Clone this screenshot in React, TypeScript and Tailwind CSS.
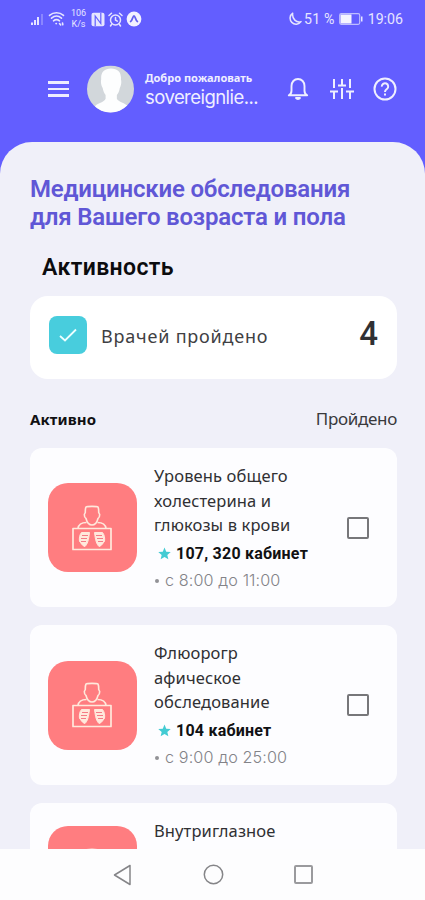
import React from 'react';

function StatusBar() {
  return (
    <div className="flex h-[38px] items-center justify-between pl-[31px] pr-[22px] text-[#e6e5ff]">
      <div className="flex items-center">
        <svg width="14" height="13" viewBox="0 0 14 13" fill="currentColor">
          <rect x="0" y="9.5" width="2" height="2.5" />
          <rect x="3" y="7" width="2" height="5" />
          <rect x="6" y="4" width="2" height="8" />
          <rect x="10" y="1" width="2" height="11" opacity="0.3" />
        </svg>
        <svg className="ml-[3px]" width="17" height="16" viewBox="0 0 17 16" fill="none" stroke="currentColor" strokeWidth="1.6" strokeLinecap="round">
          <path d="M1.5 4.4C5.5.8 11.500.8 15.500 4.400" />
          <path d="M3.500 7.200c3-2.600 7-2.600 10 0" />
          <path d="M5.500 9.800c1.800-1.500 4.200-1.500 6 0" />
          <path d="M8 12.600h.4M11.500 12.500l1.200 1.500M14.500 12l.3 1.800" />
        </svg>
        <div className="ml-[5px] flex w-[17px] flex-col items-center font-['Roboto',sans-serif] text-[9px] leading-[11px]">
          <span>106</span>
          <span>K/s</span>
        </div>
        <svg className="ml-[4px]" width="14" height="15" viewBox="0 0 14 15">
          <rect x=".5" y=".7" width="13" height="13.600" rx="2" fill="currentColor" />
          <path d="M4.200 14V4l5.600 7.500V1" fill="none" stroke="#635eff" strokeWidth="1.200" />
        </svg>
        <svg className="ml-[3px]" width="15" height="15" viewBox="0 0 15 15" fill="none" stroke="currentColor" strokeWidth="1.5" strokeLinecap="round">
          <circle cx="7.500" cy="8" r="5" />
          <path d="M1 3.500L3.500 1.300M14 3.500l-2.500-2.200M7.500 5.500V8l1.800 1.200M3.500 12.500L2.500 14M11.500 12.500l1 1.500" />
        </svg>
        <svg className="ml-[3px]" width="16" height="16" viewBox="0 0 16 16">
          <circle cx="8" cy="8" r="7.400" fill="#f2f1ff" />
          <path d="M4.600 10.600c1.800-1 2.200-5.800 3.400-5.800s1.600 4.800 3.400 5.800" fill="none" stroke="#625eee" strokeWidth="1.700" strokeLinecap="round" />
        </svg>
      </div>
      <div className="flex items-center font-['Roboto',sans-serif] text-[14.200px] leading-none">
        <svg className="mr-[2px]" width="14" height="14" viewBox="0 0 14 14" fill="none" stroke="currentColor" strokeWidth="1.500" strokeLinejoin="round">
          <path d="M4.700 1.200A6 6 0 1 0 13 9.600C8.500 11 3.800 7 4.700 1.200z" />
        </svg>
        <span className="tracking-[0.200px]">51 %</span>
        <svg className="ml-[4px] mr-[5px]" width="24" height="12" viewBox="0 0 24 12">
          <rect x=".7" y=".7" width="20" height="10.600" rx="1.500" fill="none" stroke="currentColor" strokeWidth="1.200" opacity=".7" />
          <rect x="1.500" y="1.500" width="11" height="9" fill="#f5f4ff" />
          <rect x="22" y="3.500" width="1.500" height="5" fill="currentColor" />
        </svg>
        <span>19:06</span>
      </div>
    </div>
  );
}

function Header() {
  return (
    <header className="flex h-[104px] items-start pl-[48px] pr-[28px] pt-[27px] text-[#efefff]">
      <div className="flex w-[21px] flex-col gap-[4px] pt-[16px]">
        <i className="h-[2.500px] bg-[#eeedff]" />
        <i className="h-[2.500px] bg-[#eeedff]" />
        <i className="h-[2.500px] bg-[#eeedff]" />
      </div>
      <svg className="ml-[18px]" width="47" height="48" viewBox="0 0 48 48">
        <defs>
          <clipPath id="avatar"><circle cx="24" cy="24" r="24" /></clipPath>
        </defs>
        <g clipPath="url(#avatar)">
          <rect width="48" height="48" fill="#d2d7db" />
          <path d="M24.500 3c-7 0-10.500 4-10 11-.8 3.500.3 7 1.500 9 .6 3.500 1.800 5.500 3 7v4c-1.500 4-8.500 4-11 8v7h34v-7c-3-4-10-4.500-11.500-8v-4c1.300-1.500 2.500-3.500 3-7 1.200-2 2-5.500 1.200-9 .5-7-3.200-11-10.200-11z" fill="#fdfefe" />
        </g>
      </svg>
      <div className="ml-[11px] w-[120px] whitespace-nowrap pt-[5px]">
        <div className="font-['Noto_Sans',sans-serif] text-[11px] font-bold leading-[15px]">Добро пожаловать</div>
        <div className="font-['Inter',sans-serif] text-[18.500px] leading-[25px] tracking-[-0.550px]">sovereignlie...</div>
      </div>
      <div className="ml-auto flex items-center pt-[12px]">
        <svg width="22" height="24" viewBox="0 0 22 24" fill="none" stroke="currentColor" strokeWidth="1.900" strokeLinejoin="round" strokeLinecap="round">
          <path d="M1.800 18.300h18.400c-1.600-.8-2.700-2.500-2.700-4.500V9c0-4-2.700-7-6.500-7S4.500 5 4.500 9v4.800c0 2-1.100 3.700-2.700 4.500z" />
          <path d="M9 21c.8 1.300 3.200 1.300 4 0z" fill="currentColor" />
        </svg>
        <svg className="ml-[21px]" width="24" height="24" viewBox="0 0 24 24" fill="none" stroke="currentColor" strokeWidth="2">
          <path d="M4 2v9M0 14.500h8M4 14.500V22M12 2v6M8 8.500h8M12 11v11M20 2v9M16 14.500h8M20 14.500V22" />
        </svg>
        <svg className="ml-[19px]" width="24" height="24" viewBox="0 0 24 24" fill="none" stroke="currentColor" strokeWidth="2">
          <circle cx="12" cy="12" r="10.500" />
          <path d="M8.800 9.700a3.200 3.200 0 1 1 5.100 2.300c-1.200.9-1.900 1.400-1.900 3M12 16.500v2" />
        </svg>
      </div>
    </header>
  );
}

function XRayTile() {
  return (
    <div className="flex h-[89px] w-[89px] shrink-0 items-center justify-center rounded-[20px] bg-[#ff7d80]">
      <svg className="mr-[1px]" width="40" height="48" viewBox="0 0 40 48" fill="none" stroke="#ffe9dc" strokeWidth="1.600" strokeLinejoin="round">
        <path d="M14 3c1-.8 11-.8 12 0 .8 1.500.7 3.500.7 5.500l1 2c0 2.500-.7 3.500-1.700 4-1 4-3.200 6.500-6 6.500s-5-2.500-6-6.500c-1-.5-1.700-1.500-1.700-4l1-2c0-2-.1-4 .7-5.500z" />
        <path d="M14.500 18.500c-5 0-8 2-8.500 6M25.500 18.500c5 0 8 2 8.500 6" />
        <rect x="1" y="24.500" width="38" height="21" strokeWidth="1.700" />
        <path d="M17.500 28.500h-8c-2 2.500-2.500 5.500-2 9 1.500 1 2.500 4.500 5.500 5 2.500-2.500 3.500-6 4.500-14zM22.500 28.500h8c2 2.500 2.500 5.500 2 9-1.500 1-2.500 4.500-5.500 5-2.500-2.500-3.500-6-4.500-14z" fill="#ffe9dc" strokeWidth="1" />
        <path d="M10 31.500h6M9 34.500h6M9 37.500h5M30 31.500h-6M31 34.500h-6M31 37.500h-5" stroke="#f57b86" strokeWidth="1.100" />
      </svg>
    </div>
  );
}

type Exam = { lines: string[]; room?: string; hours?: string; box: string };

const exams: Exam[] = [
  { lines: ['Уровень общего', 'холестерина и', 'глюкозы в крови'], room: '107, 320 кабинет', hours: 'с 8:00 до 11:00', box: 'h-[159px]' },
  { lines: ['Флюорогр', 'афическое', 'обследование'], room: '104 кабинет', hours: 'с 9:00 до 25:00', box: 'mt-[18px] h-[160px]' },
  { lines: ['Внутриглазное'], box: 'mt-[18px] h-[135px]' },
];

function ExamCard({ exam }: { exam: Exam }) {
  return (
    <article className={`flex items-center rounded-[12px] bg-[#fdfdff] pl-[18px] pr-[28px] ${exam.box}`}>
      <XRayTile />
      <div className="ml-[17px] self-start whitespace-nowrap pt-[16px]">
        {exam.lines.map((line) => (
          <div key={line} className="font-['Noto_Sans',sans-serif] text-[16.500px] leading-[24.500px] tracking-[0.120px] text-[#303033]">{line}</div>
        ))}
        {exam.room && (
          <>
            <div className="flex h-[32px] items-center pl-[4px] font-['Roboto',sans-serif] text-[16px] font-bold tracking-[0.230px] text-[#111113]">
              <svg className="mr-[5px]" width="13" height="13" viewBox="0 0 24 24" fill="#43cbd3">
                <path d="M12 1l3.200 7.600 8.300.7-6.300 5.400 1.900 8.100L12 18.500l-7.100 4.300 1.900-8.100L.5 9.300l8.300-.7z" />
              </svg>
              <span>{exam.room}</span>
            </div>
            <div className="flex h-[22px] items-center font-['Inter',sans-serif] text-[16.200px] font-light tracking-[0.100px] text-[#838388]">
              <i className="ml-px mr-[6px] h-[4px] w-[4px] rounded-full bg-[#929296]" />
              <span>{exam.hours}</span>
            </div>
          </>
        )}
      </div>
      {exam.room && <div className="ml-auto h-[22px] w-[22px] rounded-[2px] border-2 border-[#77777a]" />}
    </article>
  );
}

export default function App() {
  return (
    <div className="flex h-[900px] w-[425px] flex-col overflow-hidden bg-[#635eff]">
      <StatusBar />
      <Header />
      <main className="min-h-0 flex-1 overflow-hidden rounded-t-[32px] bg-[#f0f0f9] pl-[30px] pr-[28px] pt-[33px]">
        <h1 className="whitespace-nowrap font-['Roboto',sans-serif] text-[24px] font-semibold leading-[28px] tracking-[-0.190px] text-[#6057d6]">
          Медицинские обследования<br />для Вашего возраста и пола
        </h1>
        <h2 className="ml-[12px] mt-[22px] font-['Roboto',sans-serif] text-[23px] font-semibold leading-[30px] tracking-[0.400px] text-[#0c0c0e]">Активность</h2>
        <section className="mt-[13px] flex h-[83px] items-center rounded-[18px] bg-white pl-[19px] pr-[19px]">
          <div className="mb-[5px] flex h-[38px] w-[38px] items-center justify-center rounded-[8px] bg-[#48cddd]">
            <svg width="18" height="14" viewBox="0 0 18 14" fill="none" stroke="#edffff" strokeWidth="1.800"><path d="M1 8l5 4.500L17 1.500" /></svg>
          </div>
          <span className="mb-[3px] ml-[14px] whitespace-nowrap font-['Noto_Sans',sans-serif] text-[18px] tracking-[0.800px] text-[#404043]">Врачей пройдено</span>
          <span className="mb-[8px] ml-auto font-['Roboto',sans-serif] text-[33px] font-medium leading-none text-[#303033]">4</span>
        </section>
        <div className="mt-[27px] flex h-[26px] items-center justify-between">
          <span className="font-['Noto_Sans',sans-serif] text-[15px] font-bold tracking-[0.100px] text-[#101012]">Активно</span>
          <span className="font-['Noto_Sans',sans-serif] text-[17px] tracking-[-0.300px] text-[#39393c]">Пройдено</span>
        </div>
        <div className="mt-[16px]">
          {exams.map((exam) => <ExamCard key={exam.lines[0]} exam={exam} />)}
        </div>
      </main>
      <nav className="flex h-[51px] shrink-0 items-center bg-[#fdfdfe] pl-[113px]">
        <svg width="19" height="22" viewBox="0 0 19 22" fill="none" stroke="#858588" strokeWidth="1.500" strokeLinejoin="round"><path d="M17 1.500v19L1.500 11z" /></svg>
        <svg className="ml-[71px]" width="21" height="21" viewBox="0 0 21 21" fill="none" stroke="#858588" strokeWidth="1.500"><circle cx="10.500" cy="10.500" r="9.200" /></svg>
        <div className="ml-[70px] h-[19px] w-[19px] rounded-[2px] border-2 border-[#9a9a9d]" />
      </nav>
    </div>
  );
}
